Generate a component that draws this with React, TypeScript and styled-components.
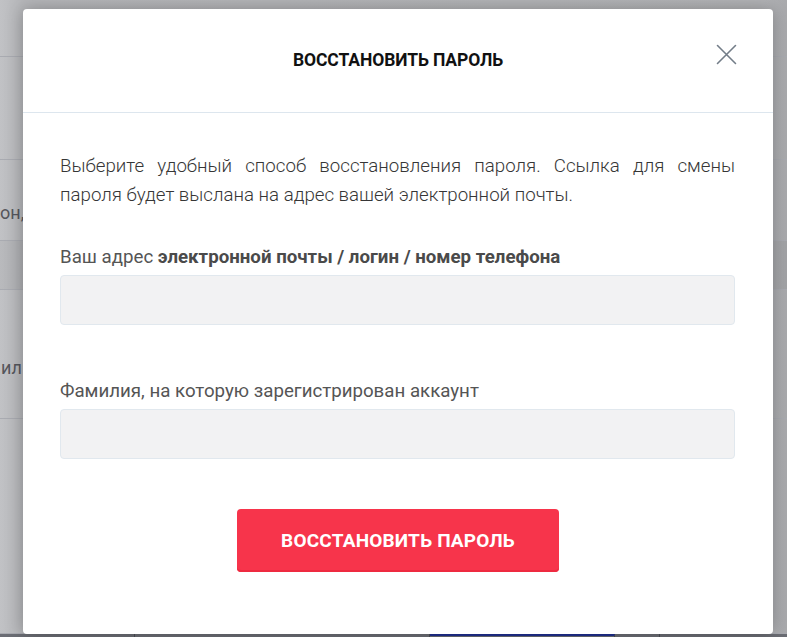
import React from "react";
import styled, { createGlobalStyle } from "styled-components";

const GlobalStyle = createGlobalStyle`
  html, body {
    margin: 0;
    padding: 0;
    background: #b9babd;
    font-family: Roboto, "Liberation Sans", Arial, sans-serif;
  }
  * { box-sizing: border-box; }
`;

/* Dimmed page that sits behind the dialog */
const Backdrop = styled.div`
  position: relative;
  width: 787px;
  height: 637px;
  overflow: hidden;
  display: flex;
  flex-direction: column;
  background: linear-gradient(90deg, #c1c2c5 0%, #b6b7ba 3%, #b3b4b7 97%, #a9aaad 100%);
`;

const PageRow = styled.div<{ $h: number; $shade?: boolean }>`
  height: ${(p) => p.$h}px;
  flex: 0 0 auto;
  border-bottom: 1px solid #a9abb1;
  background: ${(p) => (p.$shade ? "rgba(0,0,0,0.04)" : "transparent")};
  display: flex;
  align-items: center;
`;

const RowText = styled.span<{ $offset: number; $left: number }>`
  white-space: nowrap;
  font-size: 18px;
  color: #55565c;
  margin-left: ${(p) => p.$left}px;
  margin-top: ${(p) => p.$offset}px;
`;

const BottomBar = styled.div`
  flex: 1 1 auto;
  background: #6b6d74;
  display: flex;
`;

const BarCell = styled.div<{ $w: number; $blue?: boolean }>`
  width: ${(p) => p.$w}px;
  border-right: 1px solid #4b4d55;
  border-top: ${(p) => (p.$blue ? "2px solid #1f2f8f" : "none")};
`;

/* Dialog */
const Modal = styled.div`
  position: absolute;
  left: 23px;
  top: 9px;
  width: 750px;
  height: 625px;
  background: #fff;
  border-radius: 4px;
  box-shadow: 0 0 18px rgba(0, 0, 0, 0.28);
  display: flex;
  flex-direction: column;
`;

const Header = styled.div`
  position: relative;
  height: 104px;
  border-bottom: 1px solid #dde6ee;
  display: flex;
  align-items: center;
  justify-content: center;
  padding-bottom: 2px;
`;

const Title = styled.h2`
  margin: 0;
  font-size: 17.5px;
  font-weight: 700;
  color: #111;
  text-transform: uppercase;
  letter-spacing: -0.1px;
`;

const CloseButton = styled.button`
  position: absolute;
  right: 36px;
  top: 35px;
  width: 21px;
  height: 21px;
  padding: 0;
  border: 0;
  background: transparent;
  cursor: pointer;
  display: flex;
  align-items: center;
  justify-content: center;
`;

const Body = styled.div`
  padding: 39px 38px 0 37px;
  display: flex;
  flex-direction: column;
`;

const Intro = styled.p`
  margin: 0;
  font-size: 18.7px;
  font-weight: 300;
  line-height: 29px;
  color: #363636;
  text-align: justify;
`;

const Field = styled.label<{ $top: number }>`
  display: flex;
  flex-direction: column;
  margin-top: ${(p) => p.$top}px;
`;

const FieldLabel = styled.span`
  font-size: 18.7px;
  line-height: 24px;
  color: #555;
  margin-bottom: 6px;

  b {
    font-weight: 700;
    color: #4a4a4a;
  }
`;

const Input = styled.input`
  height: 50px;
  width: 100%;
  border: 1px solid #e1e8ee;
  border-radius: 4px;
  background: #f2f2f3;
  outline: none;
  font: inherit;
  padding: 0 16px;
`;

const Actions = styled.div`
  display: flex;
  justify-content: center;
  margin-top: 50px;
  padding-left: 1px;
`;

const SubmitButton = styled.button`
  width: 322px;
  height: 63px;
  border: 0;
  border-radius: 4px;
  background: #f7344b;
  box-shadow: inset 0 -2px 0 #ee2a40;
  color: #fff;
  font-family: inherit;
  font-size: 19px;
  font-weight: 700;
  text-transform: uppercase;
  letter-spacing: 0.2px;
  cursor: pointer;
`;

export default function App() {
  return (
    <>
      <GlobalStyle />
      <Backdrop>
        <PageRow $h={57} />
        <PageRow $h={103} />
        <PageRow $h={81}>
          <RowText $offset={24} $left={0}>он,</RowText>
        </PageRow>
        <PageRow $h={49} $shade />
        <PageRow $h={129}>
          <RowText $offset={26} $left={1}>ил</RowText>
        </PageRow>
        <PageRow $h={215} />
        <BottomBar>
          <BarCell $w={135} />
          <BarCell $w={295} />
          <BarCell $w={185} $blue />
          <BarCell $w={45} />
        </BottomBar>

        <Modal role="dialog" aria-labelledby="restore-title">
          <Header>
            <Title id="restore-title">Восстановить пароль</Title>
            <CloseButton aria-label="Закрыть">
              <svg width="21" height="21" viewBox="0 0 21 21">
                <path
                  d="M1.5 1.5 L19.5 19.5 M19.5 1.5 L1.5 19.5"
                  stroke="#737d88"
                  strokeWidth="1.6"
                  strokeLinecap="round"
                  fill="none"
                />
              </svg>
            </CloseButton>
          </Header>
          <Body>
            <Intro>
              Выберите удобный способ восстановления пароля. Ссылка для смены
              пароля будет выслана на адрес вашей электронной почты.
            </Intro>
            <Field $top={35}>
              <FieldLabel>
                Ваш адрес <b>электронной почты / логин / номер телефона</b>
              </FieldLabel>
              <Input type="text" />
            </Field>
            <Field $top={54}>
              <FieldLabel>Фамилия, на которую зарегистрирован аккаунт</FieldLabel>
              <Input type="text" />
            </Field>
            <Actions>
              <SubmitButton type="button">Восстановить пароль</SubmitButton>
            </Actions>
          </Body>
        </Modal>
      </Backdrop>
    </>
  );
}
